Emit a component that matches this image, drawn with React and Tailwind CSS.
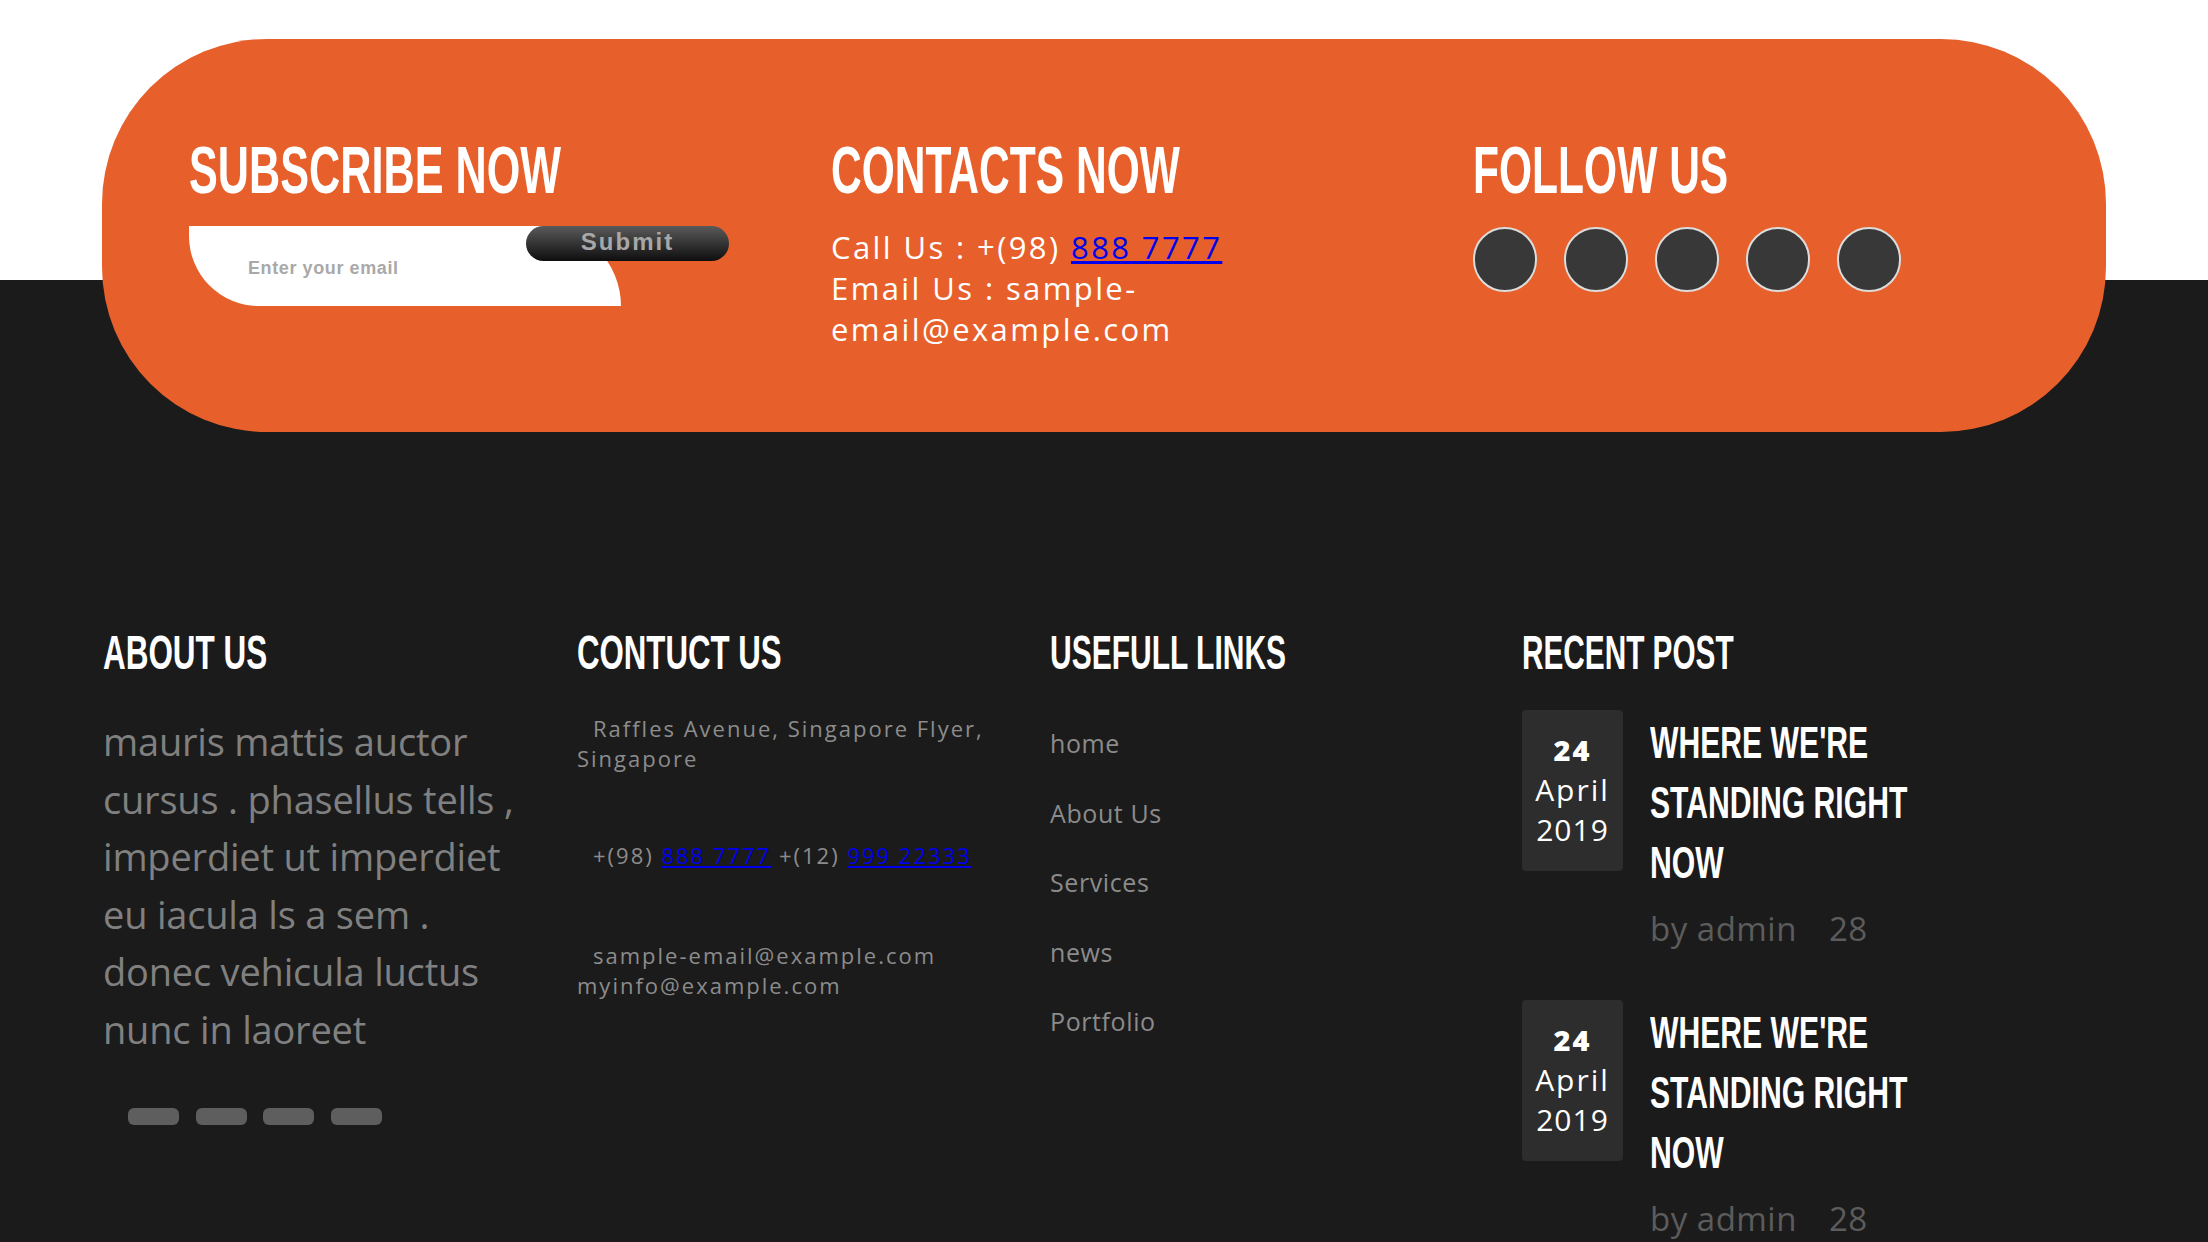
const HEAD =
  "font-['Liberation_Sans_Narrow','Liberation_Sans',sans-serif] font-bold uppercase text-white origin-left";
const BODY = "font-['Open_Sans',sans-serif]";

const LINKS = ["home", "About Us", "Services", "news", "Portfolio"];
const POSTS = [1, 2];

function DateBox() {
  return (
    <div className="flex h-[161px] w-[101px] shrink-0 flex-col items-center rounded-[4px] bg-[#2d2d2d] pt-[20px] text-white">
      <span className="text-[29px] font-extrabold leading-[40px] tracking-[2px]">24</span>
      <span className="text-[30px] leading-[40px] tracking-[2px]">April</span>
      <span className="text-[30px] leading-[40px] tracking-[1px]">2019</span>
    </div>
  );
}

function Post() {
  return (
    <div className="flex items-start gap-[27px]">
      <DateBox />
      <div className="pt-[3px]">
        <h3 className={`${HEAD} w-[420px] scale-x-[0.67] text-[45px] leading-[60px]`}>
          Where we're standing right now
        </h3>
        <p className="mt-[13px] text-[33px] leading-[45px] tracking-[0.5px] text-[#5c5c5c]">
          by admin<span className="ml-[32px]">28</span>
        </p>
      </div>
    </div>
  );
}

export default function App() {
  return (
    <div
      className={`${BODY} min-h-screen bg-[linear-gradient(to_bottom,#ffffff_280px,#1b1b1b_280px)] pb-[60px] pt-[39px]`}
    >
      {/* orange banner */}
      <div className="mx-[102px] grid h-[393px] grid-cols-[642px_642px_1fr] rounded-[165px] bg-[#e7602b] pl-[87px] pt-[97px]">
        <div>
          <h2 className={`${HEAD} scale-x-[0.645] text-[67px] leading-none`}>Subscribe Now</h2>
          <form className="relative mt-[23px] h-[80px] w-[432px]">
            <input
              type="email"
              placeholder="Enter your email"
              className="h-[80px] w-[432px] rounded-bl-[70px] rounded-tr-[80px] bg-white pl-[59px] pt-[4px] font-['Liberation_Sans_Narrow','Liberation_Sans',sans-serif] text-[18px] font-bold tracking-[0.6px] text-[#555] outline-none placeholder:text-[#a9a9a9]"
            />
            <button
              type="button"
              className="absolute left-[337px] top-0 h-[35px] w-[203px] rounded-full bg-[linear-gradient(to_bottom,#5a5a5a,#0e0e0e)] pb-[5px] font-['Liberation_Sans',sans-serif] text-[24px] font-bold leading-[27px] tracking-[2px] text-[#a7a7a7]"
            >
              Submit
            </button>
          </form>
        </div>

        <div>
          <h2 className={`${HEAD} scale-x-[0.635] text-[67px] leading-none`}>Contacts Now</h2>
          <div className="mt-[24px] w-[460px] text-[31px] leading-[41px] tracking-[2.4px] text-white">
            <p>
              Call Us : +(98){" "}
              <a href="#" className="text-[#0000ee] underline">
                888 7777
              </a>
            </p>
            <p>Email Us : sample-email@example.com</p>
          </div>
        </div>

        <div>
          <h2 className={`${HEAD} scale-x-[0.635] text-[67px] leading-none`}>Follow Us</h2>
          <div className="mt-[24px] flex gap-[27px]">
            {[0, 1, 2, 3, 4].map((i) => (
              <span
                key={i}
                className="h-[65px] w-[64px] rounded-full border-2 border-[#dcdcdc] bg-[#383838]"
              />
            ))}
          </div>
        </div>
      </div>

      {/* footer columns */}
      <div className="mx-[103px] mt-[197px] grid grid-cols-[474px_473px_472px_1fr]">
        <div>
          <h2 className={`${HEAD} scale-x-[0.655] text-[48px] leading-none`}>About Us</h2>
          <p className="mt-[36px] w-[435px] text-[38px] leading-[57.5px] tracking-[-0.2px] text-[#808080]">
            mauris mattis auctor cursus . phasellus tells , imperdiet ut imperdiet eu iacula ls a
            sem . donec vehicula luctus nunc in laoreet
          </p>
          <div className="ml-[25px] mt-[50px] flex gap-[16.5px]">
            {[0, 1, 2, 3].map((i) => (
              <span key={i} className="h-[17px] w-[51px] rounded-[6px] bg-[#5e5e5e]" />
            ))}
          </div>
        </div>

        <div>
          <h2 className={`${HEAD} scale-x-[0.65] text-[48px] leading-none`}>Contuct Us</h2>
          <div className="w-[430px] text-[22px] leading-[30px] tracking-[2px] text-[#8c8c8c]">
            <p className="mt-[36px]">
              <span className="inline-block w-[16px]" />
              Raffles Avenue, Singapore Flyer, Singapore
            </p>
            <p className="mt-[67px]">
              <span className="inline-block w-[16px]" />
              +(98){" "}
              <a href="#" className="text-[#0000ee] underline">
                888 7777
              </a>{" "}
              +(12){" "}
              <a href="#" className="text-[#0000ee] underline">
                999 22333
              </a>
            </p>
            <p className="mt-[70px]">
              <span className="inline-block w-[16px]" />
              sample-email@example.com myinfo@example.com
            </p>
          </div>
        </div>

        <div>
          <h2 className={`${HEAD} scale-x-[0.625] text-[48px] leading-none`}>Usefull Links</h2>
          <ul className="mt-[48px] flex flex-col gap-[32px]">
            {LINKS.map((link) => (
              <li
                key={link}
                className="text-[25px] leading-[37.5px] tracking-[0.6px] text-[#8b8b8b]"
              >
                {link}
              </li>
            ))}
          </ul>
        </div>

        <div>
          <h2 className={`${HEAD} scale-x-[0.62] text-[48px] leading-none`}>Recent Post</h2>
          <div className="mt-[33px] flex flex-col gap-[49px]">
            {POSTS.map((p) => (
              <Post key={p} />
            ))}
          </div>
        </div>
      </div>
    </div>
  );
}
